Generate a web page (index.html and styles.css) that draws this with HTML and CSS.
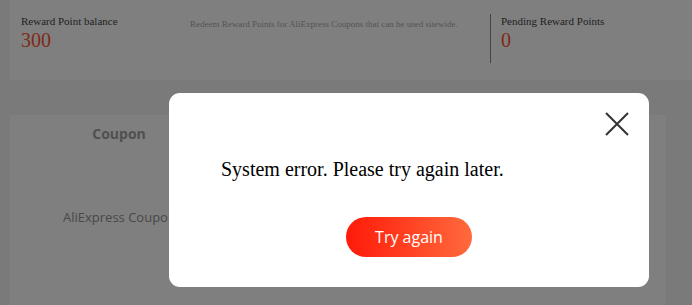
FILE: index.html
```html
<!DOCTYPE html>
<html>
<head>
<meta charset="utf-8">
<link rel="stylesheet" href="styles.css">
</head>
<body>
<div class="page">
  <section class="summary">
    <div class="stat">
      <div class="stat-label">Reward Point balance</div>
      <div class="stat-value">300</div>
    </div>
    <div class="desc">Redeem Reward Points for AliExpress Coupons that can be used sitewide.</div>
    <div class="stat stat-pending">
      <div class="stat-label">Pending Reward Points</div>
      <div class="stat-value">0</div>
    </div>
  </section>
  <section class="coupons">
    <div class="col">
      <div class="col-head">Coupon</div>
      <div class="col-item">AliExpress Coupons</div>
    </div>
  </section>
</div>
<div class="overlay"></div>
<div class="modal">
  <button class="close" aria-label="Close">
    <svg width="24" height="24" viewBox="0 0 24 24"><path d="M1 1 L23 23 M23 1 L1 23" stroke="#333" stroke-width="2" fill="none"/></svg>
  </button>
  <p class="message">System error. Please try again later.</p>
  <button class="retry">Try again</button>
</div>
</body>
</html>
```

FILE: styles.css
```css
html, body {
  margin: 0;
  padding: 0;
}
body {
  background: #f5f5f5;
  width: 692px;
  height: 305px;
  overflow: hidden;
}
.page {
  padding-left: 10px;
  display: flex;
  flex-direction: column;
  gap: 35px;
}
.summary {
  background: #fff;
  height: 80px;
  display: flex;
  align-items: flex-start;
  padding: 13px 0 0 11px;
  box-sizing: border-box;
  font-family: "Liberation Serif", "Times New Roman", serif;
}
.stat {
  width: 169px;
  padding-top: 2px;
}
.stat-label {
  font-size: 11px;
  line-height: 12px;
  color: #444;
}
.stat-value {
  font-size: 20px;
  line-height: 24px;
  margin-top: 1px;
  color: #ff5530;
}
.desc {
  width: 300px;
  font-size: 9px;
  line-height: 12px;
  color: #aaa;
  padding-top: 5px;
}
.stat-pending {
  border-left: 1px solid #888;
  height: 49px;
  padding-left: 10px;
  padding-top: 1px;
  margin-top: 1px;
  box-sizing: border-box;
}
.coupons {
  background: #fff;
  width: 656px;
  height: 200px;
  font-family: "Open Sans", sans-serif;
}
.col {
  width: 218px;
  display: flex;
  flex-direction: column;
  align-items: center;
}
.col-head {
  font-size: 14px;
  font-weight: 700;
  color: #a0a0a0;
  line-height: 20px;
  padding-top: 9px;
}
.col-item {
  font-size: 13px;
  color: #909090;
  line-height: 18px;
  margin-top: 64px;
  align-self: flex-start;
  margin-left: 53px;
  white-space: nowrap;
}
.overlay {
  position: fixed;
  inset: 0;
  background: rgba(0, 0, 0, 0.5);
}
.modal {
  position: fixed;
  left: 169px;
  top: 93px;
  width: 480px;
  height: 194px;
  background: #fff;
  border-radius: 11px;
  display: flex;
  flex-direction: column;
  align-items: center;
  box-sizing: border-box;
  padding: 0 52px;
}
.close {
  position: absolute;
  top: 19px;
  right: 20px;
  width: 24px;
  height: 24px;
  padding: 0;
  border: 0;
  background: none;
}
.close svg {
  display: block;
}
.message {
  align-self: stretch;
  margin: 64px 0 0;
  font-family: "Liberation Serif", "Times New Roman", serif;
  font-size: 20px;
  line-height: 24px;
  color: #000;
}
.retry {
  margin-top: 36px;
  width: 126px;
  height: 40px;
  border: 0;
  border-radius: 20px;
  background: linear-gradient(90deg, #ff1a08, #ff6a3d);
  color: #fff;
  font-family: "Open Sans", sans-serif;
  font-size: 16px;
}
```
